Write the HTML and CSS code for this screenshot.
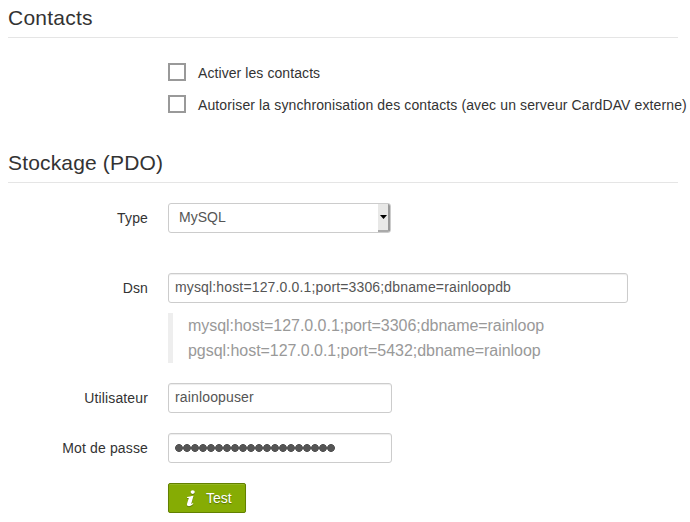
FILE: index.html
```html
<!DOCTYPE html>
<html lang="fr">
<head>
<meta charset="utf-8">
<title>Contacts</title>
<link rel="stylesheet" href="styles.css">
</head>
<body>
<form class="form">
  <div class="legend">Contacts</div>
  <div class="checks">
    <div class="check"><span class="box"></span><span class="check-text">Activer les contacts</span></div>
    <div class="check"><span class="box"></span><span class="check-text sync">Autoriser la synchronisation des contacts (avec un serveur CardDAV externe)</span></div>
  </div>
  <div class="legend storage">Stockage (PDO)</div>
  <div class="row row-type">
    <div class="label">Type</div>
    <div class="field select"><span class="value">MySQL</span><span class="arrow"><svg width="7" height="4" viewBox="0 0 7 4"><path d="M0 0h7L3.5 4z"/></svg></span></div>
  </div>
  <div class="row row-dsn">
    <div class="label">Dsn</div>
    <div class="controls">
      <div class="field wide"><span class="value dsn">mysql:host=127.0.0.1;port=3306;dbname=rainloopdb</span></div>
      <div class="quote"><div>mysql:host=127.0.0.1;port=3306;dbname=rainloop</div><div>pgsql:host=127.0.0.1;port=5432;dbname=rainloop</div></div>
    </div>
  </div>
  <div class="row">
    <div class="label">Utilisateur</div>
    <div class="field"><span class="value user">rainloopuser</span></div>
  </div>
  <div class="row">
    <div class="label">Mot de passe</div>
    <div class="field"><span class="dots"></span></div>
  </div>
  <div class="button">
    <svg class="info" width="10" height="17" viewBox="0 0 10 17"><ellipse cx="6.7" cy="2.1" rx="2.1" ry="1.8"/><path d="M1.2 7.1C3 6.8 5 6 7.5 5.7L5.4 13.2C5.2 14.3 5.7 14 6.8 12.9L7.4 13.4C5.8 15.4 4 16.3 2.3 16.1C1 15.9.7 14.9 1.1 13.6L2.7 8.4C2.9 7.7 2 7.9 1 8z"/></svg>
    <span>Test</span>
  </div>
</form>
</body>
</html>
```
FILE: styles.css
```css
* { box-sizing: border-box; }
body {
  margin: 0;
  background: #fff;
  color: #333;
  font: 14px/20px "Liberation Sans", Arial, sans-serif;
  overflow: hidden;
}
.form { width: 670px; margin-left: 8px; }
.legend {
  height: 38px;
  border-bottom: 1px solid #e5e5e5;
  font-size: 21px;
  line-height: 36px;
  letter-spacing: 0.23px;
}
.storage { letter-spacing: 0.16px; }
.checks {
  display: flex;
  flex-direction: column;
  gap: 12px;
  padding: 24px 0 31px 160px;
}
.check { display: flex; align-items: center; height: 20px; gap: 12px; white-space: nowrap; }
.box { width: 18px; height: 18px; border: 2px solid #999; flex: none; }
.check-text { padding-top: 1px; letter-spacing: 0.08px; }
.sync { letter-spacing: 0.12px; }
.row { display: flex; gap: 20px; margin-bottom: 20px; }
.row-type { margin: 20px 0 40px; }
.label { width: 140px; text-align: right; padding-top: 5px; letter-spacing: 0.14px; }
.field {
  display: flex;
  width: 224px;
  height: 30px;
  padding: 4px 6px;
  border: 1px solid #ccc;
  border-radius: 3px;
  box-shadow: inset 0 1px 1px rgba(0, 0, 0, 0.075);
  color: #555;
  white-space: nowrap;
}
.value { line-height: 19px; letter-spacing: 0.15px; }
.wide { width: 460px; }
.select { width: 223px; padding: 0 0 0 10px; justify-content: space-between; box-shadow: none; }
.select .value { line-height: 27px; letter-spacing: 0; }
.arrow {
  display: flex;
  align-items: center;
  justify-content: center;
  width: 12px;
  background: #e8e8e7;
  border-right: 2px solid #999;
  border-bottom: 2px solid #aaa;
  border-radius: 0 2px 2px 0;
}
.quote {
  height: 50px;
  margin-top: 10px;
  padding-left: 15px;
  border-left: 5px solid #eee;
  color: #999;
  font-size: 16px;
  line-height: 25px;
  letter-spacing: -0.04px;
}
.dots {
  width: 160px;
  height: 8px;
  margin-top: 6px;
  background: radial-gradient(circle at 4px 4px, #555 3.6px, transparent 4.2px) 0 0 / 8px 8px;
}
.button {
  display: flex;
  align-items: center;
  width: 78px;
  height: 30px;
  margin-left: 160px;
  padding-left: 17px;
  border: 1px solid #628000;
  border-radius: 2px;
  background: #86ac04;
  box-shadow: inset 0 1px 0 rgba(255, 255, 255, 0.12), 0 1px 2px rgba(0, 0, 0, 0.06);
  color: #fff;
  text-shadow: 0 1px 1px rgba(0, 0, 0, 0.35);
  gap: 10px;
}
.info { fill: #fff; filter: drop-shadow(0 1px 0.5px rgba(0, 0, 0, 0.3)); }
```
